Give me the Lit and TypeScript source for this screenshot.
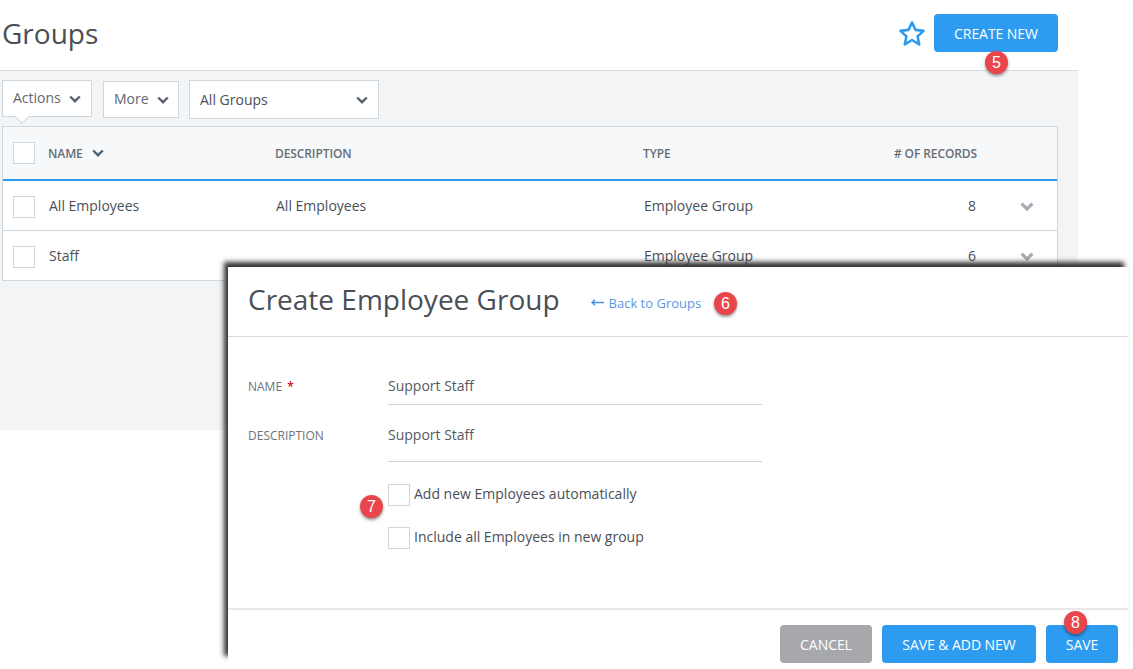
import { LitElement, html, css } from "lit";
import { customElement } from "lit/decorators.js";

const chevron = (cls: string) => html`<svg class=${cls} viewBox="0 0 12 8"><path d="M1.200 1.500 6 6.200l4.800-4.700" fill="none" stroke="currentColor"/></svg>`;

@customElement("app-root")
export class AppRoot extends LitElement {
  static styles = css`
    :host { display: block; position: relative; width: 1133px; height: 669px; overflow: hidden; background: #fff; font-family: "Open Sans", sans-serif; color: #4a4f57; font-size: 14px; }
    * { box-sizing: border-box; }
    .page { width: 1078px; }
    .head { height: 71px; border-bottom: 1px solid #d3dae3; display: flex; align-items: flex-start; padding: 14px 20px 0 2px; }
    h1 { margin: -1px 0 0; font-weight: 400; font-size: 28px; line-height: 40px; flex: 1; color: #4a4f57; }
    .star { width: 28px; height: 26px; margin: 6px 8px 0 0; }
    .btn { border: 0; border-radius: 4px; height: 38px; color: #fff; background: #2d9bf0; font: 400 14px "Open Sans", sans-serif; text-transform: uppercase; display: flex; align-items: center; justify-content: center; padding: 0; letter-spacing: -.06px; }
    .create { width: 124px; }
    .panel { height: 359px; background: #f3f4f6; padding: 9px 20px 0 2px; }
    .tools { display: flex; align-items: flex-start; height: 46px; }
    .tool { position: relative; background: #fff; border: 1px solid #ccd7e0; height: 37px; display: flex; align-items: center; color: #5f6772; }
    .actions { width: 90px; padding-left: 10px; gap: 8px; }
    .more { width: 76px; margin: 1px 10px 0 11px; padding-left: 10px; gap: 8px; }
    .all { width: 190px; height: 39px; padding: 0 10px 0 10px; justify-content: space-between; color: #4a4f57; }
    .actions span, .more span { position: relative; top: -1px; }
    .tip { position: absolute; left: 14px; top: 31px; width: 10px; height: 10px; transform: rotate(45deg); background: #fff; border: solid #ccd7e0; border-width: 0 1px 1px 0; }
    .chev { width: 12px; height: 8px; color: #59616c; stroke-width: 2.400; }
    .table { background: #fff; border: 1px solid #ccd7e0; }
    .row { display: grid; grid-template-columns: 36px 227px 368px 200px 132px 1fr; align-items: center; height: 50px; border-bottom: 1px solid #ccd7e0; padding-left: 10px; }
    .row:last-child { border-bottom: 0; height: 49px; }
    .row.th { height: 54px; background: #f7f8f9; border-bottom: 2px solid #2d9bf0; font-size: 12px; font-weight: 600; color: #676d75; text-transform: uppercase; letter-spacing: -.1px; grid-template-columns: 35px 227px 368px 200px 134px 1fr; }
    .box { display: block; width: 22px; height: 22px; background: #fff; border: 1px solid #ccd7e0; }
    .row:not(.th) .box { margin-top: 3px; }
    .name { display: flex; align-items: center; gap: 9px; }
    .name .chev { color: #4f6472; }
    .num { text-align: right; white-space: nowrap; }
    .rchev { width: 14px; height: 9px; color: #a4abb3; margin-left: 44px; margin-top: 2px; stroke-width: 2.800; }
    .sheet { position: absolute; left: 228px; top: 267px; width: 900px; height: 394px; background: #fff; box-shadow: -4px -5px 5px #333; }
    .mhead { height: 70px; border-bottom: 1px solid #d3dae3; display: flex; align-items: center; padding: 0 0 0 20px; }
    .mhead h2 { margin: 0 0 6px; font: 400 28px/40px "Open Sans", sans-serif; color: #4a4f57; }
    .back { margin-left: 31px; display: flex; align-items: center; gap: 5px; color: #5a98e6; font-size: 13px; position: relative; top: 1px; }
    .back svg { width: 13px; height: 7px; }
    .form { height: 273px; border-bottom: 2px solid #e8e8e8; padding: 25px 0 0 20px; }
    .field { display: grid; grid-template-columns: 140px 374px; }
    .label { font-size: 12px; color: #6d737b; text-transform: uppercase; line-height: 20px; padding-top: 15px; }
    .label b { color: #d0021b; font-weight: 600; margin-left: 2px; }
    .value { color: #555a62; border-bottom: 1px solid #ccd3de; line-height: 20px; padding-top: 14px; height: 43px; }
    .f2 .value { height: 57px; padding-top: 20px; }
    .f2 .label { padding-top: 21px; }
    .checks { margin: 22px 0 0 140px; display: flex; flex-direction: column; gap: 21px; }
    .check { display: flex; gap: 4px; color: #4a4f57; height: 22px; }
    .check span { line-height: 20px; }
    .foot { display: flex; justify-content: flex-end; gap: 10px; padding: 15px 10px 0 0; }
    .cancel { width: 92px; background: #a6a8ac; }
    .saveadd { width: 154px; }
    .save { width: 72px; }
    .badge { position: absolute; width: 23px; height: 23px; border-radius: 50%; background: #e8464c; color: #fff; font: 400 16px/23px "Liberation Sans", sans-serif; text-align: center; box-shadow: 0 2px 3px rgba(0,0,0,.4); }
    .b5 { left: 985px; top: 51px; }
    .b6 { left: 714px; top: 292px; }
    .b7 { left: 360px; top: 495px; }
    .b8 { left: 1064px; top: 611px; }
  `;

  render() {
    return html`
      <div class="page">
        <div class="head">
          <h1>Groups</h1>
          <svg class="star" viewBox="0 0 28 26"><path d="M14 2.500l3.500 7.400 8 1-5.900 5.500 1.600 8L14 20l-7.200 4.400 1.600-8L2.500 10.900l8-1z" fill="none" stroke="#2d9bf0" stroke-width="2.600" stroke-linejoin="round"/></svg>
          <button class="btn create">Create New</button>
        </div>
        <div class="panel">
          <div class="tools">
            <div class="tool actions"><span>Actions</span>${chevron("chev")}<i class="tip"></i></div>
            <div class="tool more"><span>More</span>${chevron("chev")}</div>
            <div class="tool all"><span>All Groups</span>${chevron("chev")}</div>
          </div>
          <div class="table">
            <div class="row th">
              <i class="box"></i>
              <div class="name"><span>Name</span>${chevron("chev")}</div>
              <div>Description</div>
              <div>Type</div>
              <div class="num"># of Records</div>
              <div></div>
            </div>
            <div class="row">
              <i class="box"></i><div>All Employees</div><div>All Employees</div><div>Employee Group</div><div class="num">8</div>${chevron("rchev")}
            </div>
            <div class="row">
              <i class="box"></i><div>Staff</div><div></div><div>Employee Group</div><div class="num">6</div>${chevron("rchev")}
            </div>
          </div>
        </div>
      </div>
      <div class="sheet">
        <div class="mhead">
          <h2>Create Employee Group</h2>
          <div class="back"><svg viewBox="0 0 13 7"><path d="M13 3.500H2M4 .8 1 3.500 4 6.200" fill="none" stroke="#4a90e2" stroke-width="1.500"/></svg><span>Back to Groups</span></div>
        </div>
        <div class="form">
          <div class="field f1"><div class="label">Name <b>*</b></div><div class="value">Support Staff</div></div>
          <div class="field f2"><div class="label">Description</div><div class="value">Support Staff</div></div>
          <div class="checks">
            <label class="check"><i class="box"></i><span>Add new Employees automatically</span></label>
            <label class="check"><i class="box"></i><span>Include all Employees in new group</span></label>
          </div>
        </div>
        <div class="foot">
          <button class="btn cancel">Cancel</button>
          <button class="btn saveadd">Save &amp; Add New</button>
          <button class="btn save">Save</button>
        </div>
      </div>
      <div class="badge b5">5</div>
      <div class="badge b6">6</div>
      <div class="badge b7">7</div>
      <div class="badge b8">8</div>
    `;
  }
}
